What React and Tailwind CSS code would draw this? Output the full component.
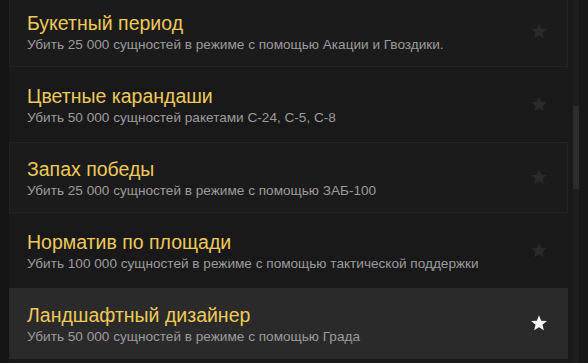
import React from "react";

const items = [
  { title: "Букетный период", desc: "Убить 25 000 сущностей в режиме с помощью Акации и Гвоздики." },
  { title: "Цветные карандаши", desc: "Убить 50 000 сущностей ракетами С-24, С-5, С-8" },
  { title: "Запах победы", desc: "Убить 25 000 сущностей в режиме с помощью ЗАБ-100" },
  { title: "Норматив по площади", desc: "Убить 100 000 сущностей в режиме с помощью тактической поддержки" },
  { title: "Ландшафтный дизайнер", desc: "Убить 50 000 сущностей в режиме с помощью Града", active: true },
];

function Star({ className }) {
  return (
    <svg viewBox="0 0 24 24" className={className} fill="currentColor">
      <path d="M12 1.8l2.9 7.1 7.6.5-5.9 4.9 1.9 7.4L12 17.6l-6.5 4.1 1.9-7.4-5.9-4.9 7.6-.5z" />
    </svg>
  );
}

function Row({ item, index }) {
  const bordered = index % 2 === 0 && !item.active;
  return (
    <div
      className={`h-[71px] shrink-0 flex items-start border pl-[17px] pr-[19px] ${
        item.active
          ? "bg-[#2a2a2a] border-transparent"
          : bordered
          ? "bg-[#1b1b1b] border-[#242424]"
          : "bg-[#191919] border-transparent"
      }`}
    >
      <div className="flex-1 flex flex-col pt-[14px]">
        <div className="text-[19.5px] leading-[24px] text-[#efc95a]">{item.title}</div>
        <div className="text-[13.6px] leading-[18px] text-[#9c9c9c] mt-[1px]">{item.desc}</div>
      </div>
      <Star className={`w-[18px] h-[18px] mt-[25px] ${item.active ? "text-[#f4f4f4]" : "text-[#2a2a2a]"}`} />
    </div>
  );
}

export default function App() {
  return (
    <div
      className="w-[588px] h-[363px] overflow-hidden flex bg-[#151515]"
      style={{ fontFamily: '"Liberation Sans", "DejaVu Sans", sans-serif' }}
    >
      <div className="w-[9px] shrink-0 bg-[#141414]" />
      <div className="w-[559px] shrink-0 flex flex-col gap-[2px] -mt-[4px] bg-[#191919]">
        {items.map((item, i) => (
          <Row key={i} item={item} index={i} />
        ))}
      </div>
      <div className="w-[5px] shrink-0 bg-[#191919]" />
      <div className="w-[6px] shrink-0 bg-[#1d1d1d] flex flex-col">
        <div className="h-[106px]" />
        <div className="h-[83px] bg-[#2d2d2d]" />
      </div>
      <div className="flex-1 bg-[#171717]" />
    </div>
  );
}
